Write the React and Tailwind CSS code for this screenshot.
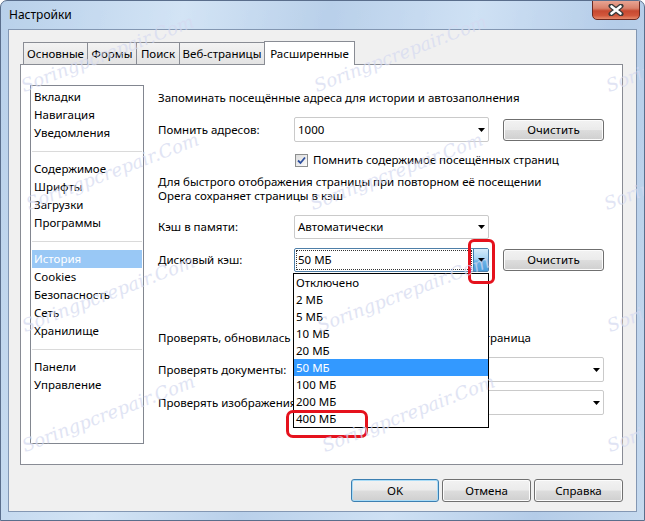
import React from "react";

function Arrow() {
  return (
    <svg width="7" height="4" viewBox="0 0 7 4" className="block">
      <path d="M0 0H7L3.5 4Z" fill="#000" />
    </svg>
  );
}

function Combo({ value }) {
  return (
    <div className="w-[195px] shrink-0 h-[25px] border border-[#cacaca] rounded-[2px] bg-white flex items-center justify-between pl-[3px] pr-[3px]">
      <span>{value}</span>
      <Arrow />
    </div>
  );
}

function WideCombo() {
  return (
    <div className="relative w-[310px] shrink-0 h-[25px] border border-[#cacaca] rounded-[2px] bg-white flex items-center justify-end pr-[3px]">
      <Arrow />
    </div>
  );
}

function Button({ children }) {
  return (
    <div className="w-[101px] h-[22px] rounded-[3px] border border-[#707070] bg-[linear-gradient(#f2f2f2_0%,#ebebeb_48%,#dddddd_52%,#cfcfcf_100%)] shadow-[inset_0_0_0_1px_#fcfcfc] flex items-center justify-center">
      {children}
    </div>
  );
}

function ListItem({ children, selected }) {
  return (
    <div
      className={
        selected
          ? "mx-[1px] px-[2px] h-[18px] leading-[18px] bg-[#99c8f6] text-white"
          : "mx-[1px] px-[2px] h-[18px] leading-[18px]"
      }
    >
      {children}
    </div>
  );
}

function Sep() {
  return (
    <div className="h-[18px] flex items-center mx-[1px]">
      <div className="h-px w-full bg-[#dadada]" />
    </div>
  );
}

export default function App() {
  const tabs = [
    ["Основные", "w-[65px]"],
    ["Формы", "w-[50px]"],
    ["Поиск", "w-[44px]"],
    ["Веб-страницы", "w-[86px]"],
  ];
  const items = ["Отключено", "2 МБ", "5 МБ", "10 МБ", "20 МБ", "50 МБ", "100 МБ", "200 МБ", "400 МБ"];
  return (
    <div className="relative w-[645px] h-[521px] overflow-hidden font-['Noto_Sans','Liberation_Sans',sans-serif] text-[11.5px] text-black flex flex-col px-[7px] pb-[8px] bg-[linear-gradient(100deg,#b8d0ea_0%,#d3e4f5_25%,#b9d0ea_45%,#cfe1f4_65%,#b4cce8_85%,#c6daef_100%)] border border-[#5a6e8c] rounded-t-[7px]">
      {/* title bar */}
      <div className="h-[28px] flex items-center pl-[1px] relative">
        <span className="text-[12px]">Настройки</span>
        <div className="absolute right-[-3px] top-[-1px] w-[48px] h-[20px] rounded-b-[5px] border border-[#6b2a22] bg-[linear-gradient(#e8a493_0%,#d9826c_40%,#c74a32_55%,#d2573c_80%,#e58a6c_100%)] flex items-center justify-center">
          <svg width="16" height="12" viewBox="0 0 16 12">
            <path d="M3 2L13 10M13 2L3 10" stroke="#3a3a3a" strokeWidth="5" strokeLinecap="round" />
            <path d="M3.5 2.5L12.5 9.5M12.5 2.5L3.5 9.5" stroke="#fff" strokeWidth="2.6" strokeLinecap="round" />
          </svg>
        </div>
      </div>

      {/* client area */}
      <div className="flex-1 border border-[#8397b3] bg-[#f0f0f0] pt-[11px] pl-[11px] pr-[13px] flex flex-col">
        {/* tab strip */}
        <div className="h-[23px] flex items-end pl-[3px] relative z-10">
          {tabs.map(([t, w]) => (
            <div
              key={t}
              className={`${w} h-[22px] border border-b-0 border-[#898c95] -ml-px first:ml-0 bg-[linear-gradient(#f3f3f3,#e3e3e3)] flex items-center justify-center`}
            >
              {t}
            </div>
          ))}
          <div className="w-[91px] h-[24px] -mb-px -ml-px border border-b-0 border-[#898c95] bg-white flex items-center justify-center">
            Расширенные
          </div>
        </div>

        {/* panel */}
        <div className="h-[401px] border border-[#898c95] bg-white flex items-start pl-[9px] pt-[20px]">
          {/* left list */}
          <div className="w-[114px] shrink-0 h-[359px] border border-[#828790] pt-[2px]">
            <ListItem>Вкладки</ListItem>
            <ListItem>Навигация</ListItem>
            <ListItem>Уведомления</ListItem>
            <Sep />
            <ListItem>Содержимое</ListItem>
            <ListItem>Шрифты</ListItem>
            <ListItem>Загрузки</ListItem>
            <ListItem>Программы</ListItem>
            <Sep />
            <ListItem selected>История</ListItem>
            <ListItem>Cookies</ListItem>
            <ListItem>Безопасность</ListItem>
            <ListItem>Сеть</ListItem>
            <ListItem>Хранилище</ListItem>
            <Sep />
            <ListItem>Панели</ListItem>
            <ListItem>Управление</ListItem>
          </div>

          {/* right column */}
          <div className="ml-[14px] flex flex-col">
            <div className="mt-[4px] h-[18px] leading-[18px] whitespace-nowrap">
              Запоминать посещённые адреса для истории и автозаполнения
            </div>
            <div className="mt-[10px] h-[25px] flex items-center">
              <span className="w-[136px] shrink-0 whitespace-nowrap">Помнить адресов:</span>
              <Combo value="1000" />
              <div className="ml-[14px]">
                <Button>Очистить</Button>
              </div>
            </div>
            <div className="mt-[9px] h-[18px] flex items-center pl-[137px]">
              <div className="w-[13px] h-[13px] border border-[#8e8f8f] bg-[linear-gradient(135deg,#dcdcdc,#fbfbfb)] flex items-center justify-center">
                <svg width="9" height="9" viewBox="0 0 9 9">
                  <path d="M1 4.5L3.5 7L8 1.5" stroke="#2d4f9e" strokeWidth="1.8" fill="none" />
                </svg>
              </div>
              <span className="ml-[5px] whitespace-nowrap">Помнить содержимое посещённых страниц</span>
            </div>
            <div className="mt-[6px] leading-[14px] whitespace-nowrap">
              <div>Для быстрого отображения страницы при повторном её посещении</div>
              <div>Opera сохраняет страницы в кэш</div>
            </div>
            <div className="mt-[12px] h-[24px] flex items-center">
              <span className="w-[136px] shrink-0 whitespace-nowrap">Кэш в памяти:</span>
              <div className="w-[195px] h-[24px] border border-[#cacaca] rounded-[2px] bg-white flex items-center justify-between pl-[3px] pr-[3px]">
                <span>Автоматически</span>
                <Arrow />
              </div>
            </div>
            <div className="mt-[9px] h-[24px] flex items-center">
              <span className="w-[136px] shrink-0 whitespace-nowrap">Дисковый кэш:</span>
              <div className="w-[195px] h-[24px] border border-[#4f7fa8] rounded-[2px] bg-white flex items-stretch">
                <div className="flex-1 m-[1px] border border-dotted border-[#333] flex items-center pl-[1px]">50 МБ</div>
                <div className="w-[15px] border-l border-[#3c7fb1] bg-[linear-gradient(#d6ecfb_0%,#a9d5f4_45%,#6cb3e6_55%,#4a9ddb_100%)] flex items-center justify-center">
                  <Arrow />
                </div>
              </div>
              <div className="ml-[14px]">
                <Button>Очистить</Button>
              </div>
            </div>
            <div className="mt-[57px] h-[18px] leading-[18px] w-[373px] flex justify-between whitespace-nowrap">
              <span>Проверять, обновилась ли кэшированная</span>
              <span>страница</span>
            </div>
            <div className="mt-[10px] h-[25px] flex items-center">
              <span className="w-[136px] shrink-0 whitespace-nowrap">Проверять документы:</span>
              <WideCombo />
            </div>
            <div className="mt-[8px] h-[25px] flex items-center">
              <span className="w-[136px] shrink-0 whitespace-nowrap">Проверять изображения:</span>
              <WideCombo />
            </div>
          </div>
        </div>

        {/* bottom buttons */}
        <div className="mt-[14px] flex justify-end gap-[3px]">
          <div className="w-[88px] h-[23px] rounded-[3px] border border-[#3c7fb1] bg-[linear-gradient(#f2f2f2_0%,#ebebeb_48%,#dddddd_52%,#cfcfcf_100%)] shadow-[inset_0_0_0_1px_#a9dcf7] flex items-center justify-center">
            OK
          </div>
          <div className="w-[89px] h-[23px] rounded-[3px] border border-[#707070] bg-[linear-gradient(#f2f2f2_0%,#ebebeb_48%,#dddddd_52%,#cfcfcf_100%)] shadow-[inset_0_0_0_1px_#fcfcfc] flex items-center justify-center">
            Отмена
          </div>
          <div className="w-[89px] h-[23px] rounded-[3px] border border-[#707070] bg-[linear-gradient(#f2f2f2_0%,#ebebeb_48%,#dddddd_52%,#cfcfcf_100%)] shadow-[inset_0_0_0_1px_#fcfcfc] flex items-center justify-center">
            Справка
          </div>
        </div>
      </div>

      {/* open dropdown list */}
      <div className="absolute left-[292px] top-[272px] w-[196px] border border-black bg-white z-20">
        {items.map((it) => (
          <div
            key={it}
            className={
              it === "50 МБ"
                ? "h-[17px] leading-[17px] pl-[2px] bg-[#3399ff] text-white"
                : "h-[17px] leading-[17px] pl-[2px]"
            }
          >
            {it}
          </div>
        ))}
      </div>

      {/* red highlight marks */}
      <div className="absolute left-[467px] top-[238px] w-[27px] h-[45px] border-[3px] border-[#e5121d] rounded-[6px] z-30" />
      <div className="absolute left-[285px] top-[409px] w-[82px] h-[28px] border-[3px] border-[#e5121d] rounded-[7px] z-30" />

      {/* watermarks */}
      <div className="pointer-events-none absolute inset-0 z-40 font-['DejaVu_Serif',serif] italic text-[18px] leading-[18px] text-[#d4d9f0] opacity-70">
        <div className="absolute left-[24px] top-[76px] origin-bottom-left -rotate-[21deg] whitespace-nowrap">Soringpcrepair.Com</div>
        <div className="absolute left-[317px] top-[76px] origin-bottom-left -rotate-[21deg] whitespace-nowrap">Soringpcrepair.Com</div>
        <div className="absolute left-[609px] top-[76px] origin-bottom-left -rotate-[21deg] whitespace-nowrap">Soringpcrepair.Com</div>
        <div className="absolute left-[29px] top-[194px] origin-bottom-left -rotate-[21deg] whitespace-nowrap">Soringpcrepair.Com</div>
        <div className="absolute left-[313px] top-[194px] origin-bottom-left -rotate-[21deg] whitespace-nowrap">Soringpcrepair.Com</div>
        <div className="absolute left-[607px] top-[194px] origin-bottom-left -rotate-[21deg] whitespace-nowrap">Soringpcrepair.Com</div>
        <div className="absolute left-[25px] top-[316px] origin-bottom-left -rotate-[21deg] whitespace-nowrap">Soringpcrepair.Com</div>
        <div className="absolute left-[320px] top-[316px] origin-bottom-left -rotate-[21deg] whitespace-nowrap">Soringpcrepair.Com</div>
        <div className="absolute left-[610px] top-[316px] origin-bottom-left -rotate-[21deg] whitespace-nowrap">Soringpcrepair.Com</div>
        <div className="absolute left-[25px] top-[436px] origin-bottom-left -rotate-[21deg] whitespace-nowrap">Soringpcrepair.Com</div>
        <div className="absolute left-[325px] top-[436px] origin-bottom-left -rotate-[21deg] whitespace-nowrap">Soringpcrepair.Com</div>
        <div className="absolute left-[610px] top-[436px] origin-bottom-left -rotate-[21deg] whitespace-nowrap">Soringpcrepair.Com</div>
      </div>
    </div>
  );
}
